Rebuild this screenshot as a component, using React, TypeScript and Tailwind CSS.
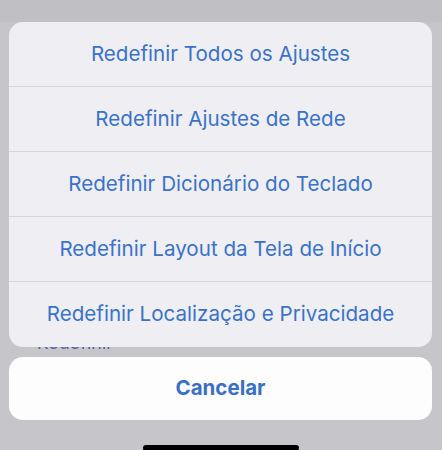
import React from "react";

const items = [
  "Redefinir Todos os Ajustes",
  "Redefinir Ajustes de Rede",
  "Redefinir Dicionário do Teclado",
  "Redefinir Layout da Tela de Início",
  "Redefinir Localização e Privacidade",
];

export default function App() {
  return (
    <div
      className="w-[442px] h-[450px] overflow-hidden bg-[#c6c6ca] flex flex-col"
      style={{ fontFamily: 'Inter, "Noto Sans", sans-serif' }}
    >
      <div className="h-[22px] bg-[#c0c0c4]" />
      <div className="ml-[9px] w-[423px] rounded-[14px] bg-[#efeff3] overflow-hidden flex flex-col">
        {items.map((t, i) => (
          <div
            key={t}
            className={
              "h-[65px] flex items-center justify-center text-[20.6px] text-[#3a72c8] " +
              (i < items.length - 1 ? "border-b border-[#d5d5da]" : "")
            }
          >
            {t}
          </div>
        ))}
      </div>
      <div className="relative h-[10px] overflow-hidden">
        <div className="absolute left-[37px] top-[-18px] text-[18px] leading-[27px] text-[#4a64a8] blur-[0.5px]">
          Redefinir
        </div>
      </div>
      <div className="ml-[9px] w-[423px] h-[63px] rounded-[14px] bg-[#fdfdfd] flex items-center justify-center text-[20.5px] font-bold text-[#3a6fc6]">
        Cancelar
      </div>
      <div className="flex-1 flex items-end justify-center">
        <div className="w-[156px] h-[6px] rounded-full bg-black translate-y-[1px]" />
      </div>
    </div>
  );
}
